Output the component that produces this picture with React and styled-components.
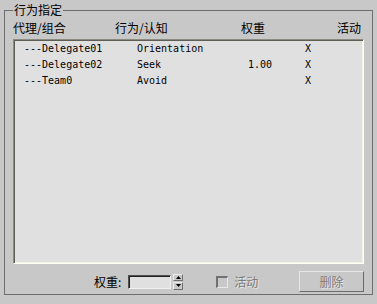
import React from "react";
import styled, { createGlobalStyle } from "styled-components";

const Global = createGlobalStyle`
  html, body {
    margin: 0;
    padding: 0;
    background: #c8c8c8;
  }
  body {
    font-family: "Noto Sans CJK SC", "DejaVu Sans", sans-serif;
    font-size: 12px;
    color: #000;
  }
`;

const Page = styled.div`
  width: 377px;
  height: 304px;
  box-sizing: border-box;
  padding: 4px 4px 3px 4px;
`;

const Group = styled.fieldset`
  margin: 0;
  height: 291px;
  box-sizing: border-box;
  padding: 0 8px 0 8px;
  border: 1px solid #6e6e6e;
  min-width: 0;
`;

const Legend = styled.legend`
  padding: 0 1px;
  margin-left: 0;
  font-size: 12px;
  line-height: 12px;
`;

const Header = styled.div`
  display: flex;
  height: 23px;
  align-items: center;
  font-size: 12px;
  line-height: 14px;
`;

const HeadCell = styled.span`
  width: ${(p) => p.$w}px;
  flex: none;
`;

const List = styled.div`
  height: 225px;
  box-sizing: border-box;
  background: #e0e0e0;
  border-top: 1px solid #8a8a80;
  border-left: 1px solid #8a8a80;
  border-right: 1px solid #fffff4;
  border-bottom: 1px solid #fffff4;
  box-shadow: inset 1px 1px 0 #5e5e54, inset -1px -1px 0 #f4f4e8;
  padding-top: 1px;
  font-family: "DejaVu Sans Mono", "Liberation Mono", monospace;
  font-size: 10px;
  color: #000;
`;

const Row = styled.div`
  display: grid;
  grid-template-columns: 113px 85px 50px 1fr;
  height: 16px;
  line-height: 16px;
  padding-left: 10px;
  white-space: pre;
`;

const Num = styled.span`
  text-align: right;
`;

const Flag = styled.span`
  padding-left: 33px;
`;

const Footer = styled.div`
  display: flex;
  align-items: center;
  height: 21px;
  margin-top: 7px;
`;

const Label = styled.span`
  margin-left: 81px;
  margin-right: 7px;
  font-size: 12px;
`;

const Field = styled.div`
  width: 41px;
  height: 12px;
  background: #e0e0e0;
  border-top: 1px solid #505050;
  border-left: 1px solid #505050;
  border-right: 1px solid #f0f0f0;
  border-bottom: 1px solid #f0f0f0;
  box-shadow: inset 1px 1px 0 #202020;
`;

const Spinner = styled.div`
  width: 10px;
  height: 16px;
  margin-left: 2px;
  display: flex;
  flex-direction: column;
  gap: 1px;
`;

const SpinHalf = styled.div`
  flex: 1;
  display: flex;
  align-items: center;
  justify-content: center;
  border: 1px solid #ececec;
  border-right-color: #707070;
  border-bottom-color: #707070;
`;

const Check = styled.div`
  width: 9px;
  height: 9px;
  margin-left: 33px;
  border-top: 2px solid #707070;
  border-left: 2px solid #707070;
  border-right: 1px solid #e8e8e8;
  border-bottom: 1px solid #e8e8e8;
`;

const Disabled = styled.span`
  color: #7c7c7c;
  text-shadow: 1px 1px 0 #e6e6e6;
  font-size: 12px;
`;

const CheckLabel = styled(Disabled)`
  margin-left: 6px;
`;

const Button = styled.div`
  margin-left: auto;
  width: 63px;
  height: 19px;
  display: flex;
  align-items: center;
  justify-content: center;
  border-top: 1px solid #e6e6e6;
  border-left: 1px solid #e6e6e6;
  border-right: 1px solid #6a6a6a;
  border-bottom: 1px solid #6a6a6a;
`;

const rows = [
  { name: "---Delegate01", behavior: "Orientation", weight: "" },
  { name: "---Delegate02", behavior: "Seek", weight: "1.00" },
  { name: "---Team0", behavior: "Avoid", weight: "" },
];

const Arrow = ({ up }) => (
  <svg width="5" height="3" viewBox="0 0 5 3">
    <path d={up ? "M2.5 0 L5 3 L0 3 Z" : "M0 0 L5 0 L2.5 3 Z"} fill="#000" />
  </svg>
);

export default function App() {
  return (
    <Page>
      <Global />
      <Group>
        <Legend>行为指定</Legend>
        <Header>
          <HeadCell $w={102}>代理/组合</HeadCell>
          <HeadCell $w={126}>行为/认知</HeadCell>
          <HeadCell $w={96}>权重</HeadCell>
          <HeadCell $w={26}>活动</HeadCell>
        </Header>
        <List>
          {rows.map((r) => (
            <Row key={r.name}>
              <span>{r.name}</span>
              <span>{r.behavior}</span>
              <Num>{r.weight}</Num>
              <Flag>X</Flag>
            </Row>
          ))}
        </List>
        <Footer>
          <Label>权重:</Label>
          <Field />
          <Spinner>
            <SpinHalf>
              <Arrow up />
            </SpinHalf>
            <SpinHalf>
              <Arrow />
            </SpinHalf>
          </Spinner>
          <Check />
          <CheckLabel>活动</CheckLabel>
          <Button>
            <Disabled>删除</Disabled>
          </Button>
        </Footer>
      </Group>
    </Page>
  );
}
